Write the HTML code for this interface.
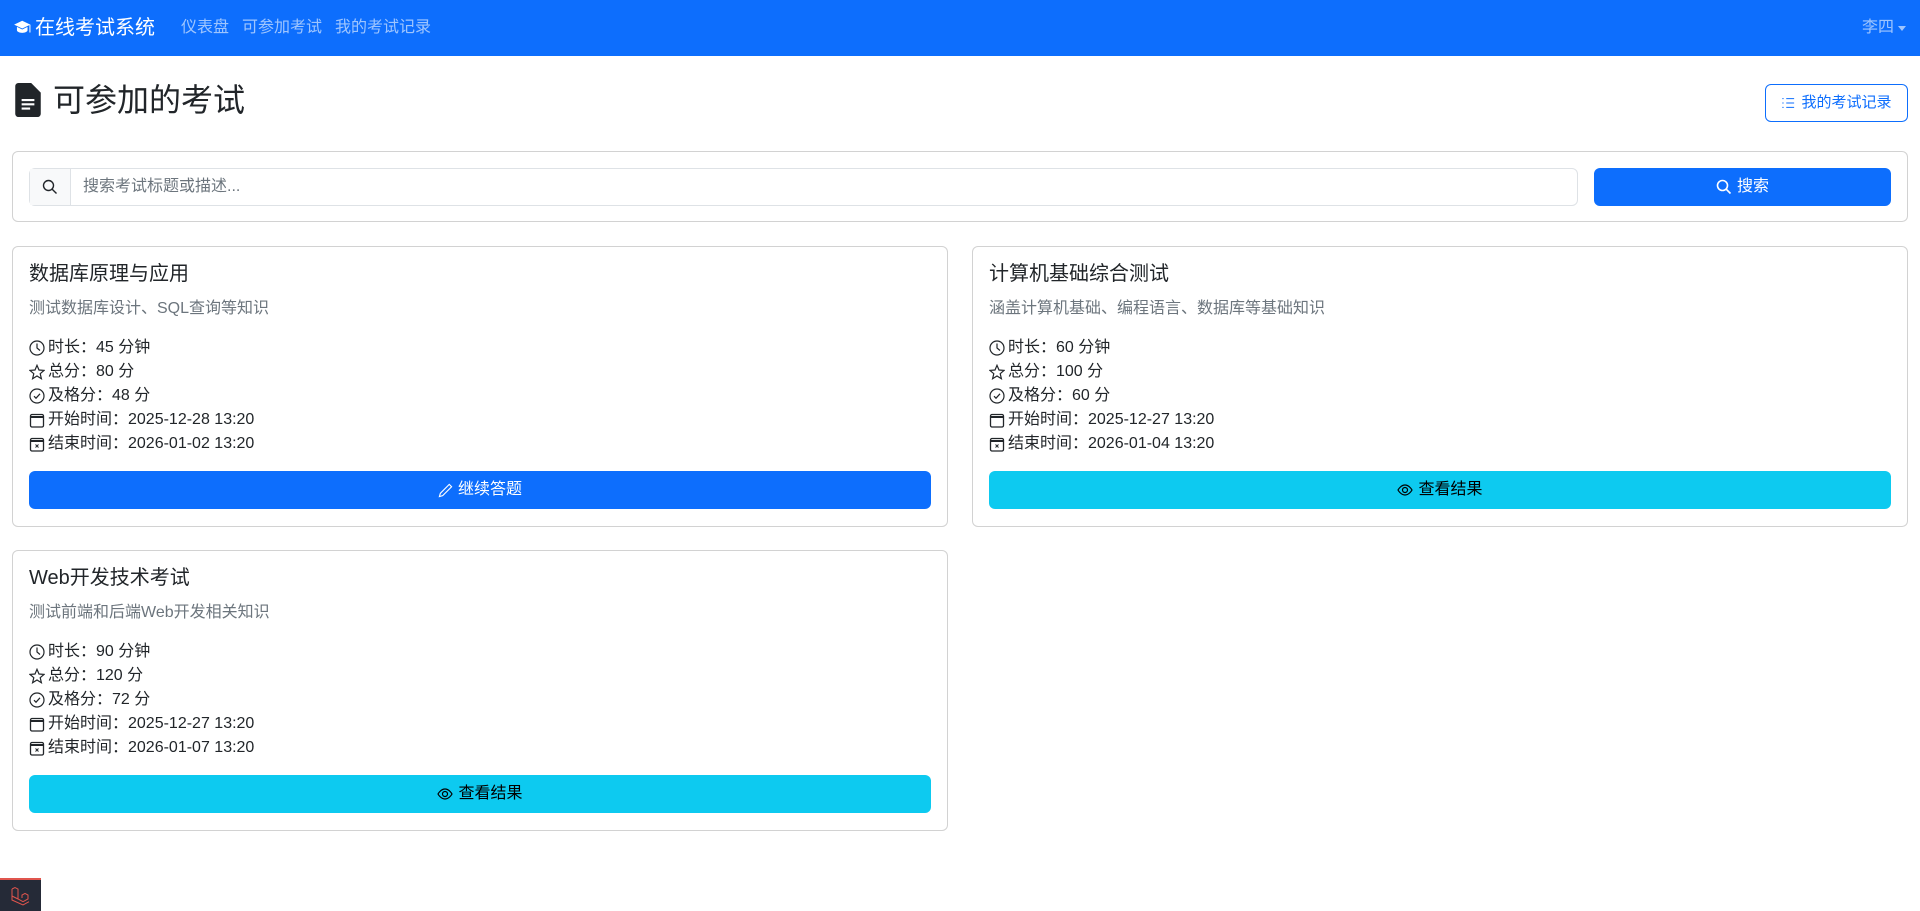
<!DOCTYPE html>
<html><head><meta charset="utf-8"><style>
*{box-sizing:border-box;margin:0;padding:0}
body{width:1920px;height:911px;overflow:hidden;background:#fff;font-family:"Liberation Sans","Noto Sans CJK SC",sans-serif;font-size:16px;color:#212529;line-height:1.5;position:relative}
.nav{height:56px;background:#0d6efd;position:relative}
.brand{position:absolute;left:12px;top:13px;color:#fff;font-size:20px;line-height:30px;display:flex;align-items:center;gap:3px}
.links{position:absolute;left:181px;top:16px;color:rgba(255,255,255,.6);font-size:16px;line-height:24px}
.links span{margin-right:13px}
.user{position:absolute;right:26px;top:16px;color:rgba(255,255,255,.6)}
.caret{position:absolute;right:14px;top:26px;width:0;height:0;border-left:4px solid transparent;border-right:4px solid transparent;border-top:5px solid rgba(255,255,255,.6)}
h2{position:absolute;left:15px;top:80px;font-size:32px;font-weight:400;line-height:40px;display:flex;align-items:center;gap:12px}
.obtn{position:absolute;left:1765px;top:84px;width:143px;height:38px;border:1px solid #0d6efd;border-radius:6px;color:#0d6efd;font-size:15px;display:flex;align-items:center;justify-content:center;gap:6px}
.card{position:absolute;border:1px solid rgba(0,0,0,.175);border-radius:6px;background:#fff}
.ig{position:absolute;left:16px;top:16px;width:1549px;height:38px;border:1px solid #dee2e6;border-radius:6px;display:flex}
.ig .ad{width:41px;background:#f8f9fa;border-right:1px solid #dee2e6;display:flex;align-items:center;justify-content:center}
.ig .ph{padding-left:12px;line-height:36px;color:#6c757d}
.sbtn{position:absolute;left:1581px;top:16px;width:297px;height:38px;background:#0d6efd;border-radius:6px;color:#fff;display:flex;align-items:center;justify-content:center;gap:5px}
.ex{width:936px;height:281px}
.ex .t{position:absolute;left:16px;top:12px;font-size:20px;line-height:30px}
.ex .d{position:absolute;left:16px;top:50px;color:#6c757d}
.ex ul{position:absolute;left:16px;top:89px;list-style:none}
.ex li{display:flex;align-items:center;gap:3px;height:24px}
.ex .b{position:absolute;left:16px;top:224px;width:902px;height:38px;border-radius:6px;display:flex;align-items:center;justify-content:center;gap:5px}
.pb{background:#0d6efd;color:#fff}
.ib{background:#0dcaf0;color:#000}
.dbg{position:absolute;left:0;top:878px;width:41px;height:33px;background:#252a37;border-top:2px solid #e0554d;display:flex;align-items:center;justify-content:center}
</style></head><body>
<div class="nav">
<div class="brand"><svg width="20" height="18" viewBox="0 0 16 16" fill="#fff"><path d="M8.2 1.6 15.4 5 8.2 8.4 1 5z"/><path d="M3.5 7v3c0 1.2 2 2.3 4.7 2.3s4.7-1.1 4.7-2.3V7L8.2 9.3z"/><rect x="14.6" y="5" width="0.9" height="7"/></svg>在线考试系统</div>
<div class="links"><span>仪表盘</span><span>可参加考试</span><span>我的考试记录</span></div>
<div class="user">李四</div><div class="caret"></div>
</div>
<h2><svg width="26" height="34" viewBox="0 0 12 16"><path d="M1.5 0h6L12 4.5V14.5A1.5 1.5 0 0 1 10.5 16h-9A1.5 1.5 0 0 1 0 14.5V1.5A1.5 1.5 0 0 1 1.5 0z" fill="#212529"/><path d="M3 8h6M3 10h6M3 12h4" stroke="#fff" stroke-width="1"/></svg>可参加的考试</h2>
<div class="obtn"><svg width="14" height="14" viewBox="0 0 16 16" fill="none" stroke="#0d6efd" stroke-width="1.2"><path d="M6 3h9M6 8h9M6 13h9M1.5 3h1.5M1.5 8h1.5M1.5 13h1.5"/></svg>我的考试记录</div>
<div class="card" style="left:12px;top:151px;width:1896px;height:71px">
<div class="ig"><div class="ad"><svg width="16" height="16" viewBox="0 0 16 16" fill="none" stroke="#212529" stroke-width="1.4"><circle cx="6.5" cy="6.5" r="5"/><path d="M10.2 10.2 14.5 14.5"/></svg></div><div class="ph">搜索考试标题或描述...</div></div>
<div class="sbtn"><svg width="16" height="16" viewBox="0 0 16 16" fill="none" stroke="#fff" stroke-width="1.6"><circle cx="6.5" cy="6.5" r="5"/><path d="M10.2 10.2 14.5 14.5"/></svg>搜索</div>
</div>

<div class="card ex" style="left:12px;top:246px">
<div class="t">数据库原理与应用</div><div class="d">测试数据库设计、SQL查询等知识</div>
<ul>
<li><svg width="16" height="16" viewBox="0 0 16 16" fill="none" stroke="#212529" stroke-width="1.2"><circle cx="8" cy="8" r="7"/><path d="M8 3.5V8l3 2.5"/></svg>时长：45 分钟</li>
<li><svg width="16" height="16" viewBox="0 0 16 16" fill="none" stroke="#212529" stroke-width="1.2"><path d="M8 1.3 10 6l5 .4-3.8 3.3 1.2 5L8 12l-4.4 2.7 1.2-5L1 6.4 6 6z"/></svg>总分：80 分</li>
<li><svg width="16" height="16" viewBox="0 0 16 16" fill="none" stroke="#212529" stroke-width="1.2"><circle cx="8" cy="8" r="7"/><path d="m5 8.2 2 2 4-4.4"/></svg>及格分：48 分</li>
<li><svg width="16" height="16" viewBox="0 0 16 16" fill="none" stroke="#212529" stroke-width="1.3"><rect x="1.5" y="2.5" width="13" height="12.5" rx="1.5"/><path d="M1.5 5h13" stroke-width="2"/></svg>开始时间：2025-12-28 13:20</li>
<li><svg width="16" height="16" viewBox="0 0 16 16" fill="none" stroke="#212529" stroke-width="1.3"><rect x="1.5" y="2.5" width="13" height="12.5" rx="1.5"/><path d="M1.5 5h13" stroke-width="2"/><path d="m6.5 8.5 3 3m0-3-3 3" stroke-width="1"/></svg>结束时间：2026-01-02 13:20</li>
</ul>
<div class="b pb"><svg width="15" height="15" viewBox="0 0 16 16" fill="none" stroke="#fff" stroke-width="1.2"><path d="M12 1.5 14.5 4 5 13.5 1.5 14.5 2.5 11z"/></svg>继续答题</div>
</div>

<div class="card ex" style="left:972px;top:246px">
<div class="t">计算机基础综合测试</div><div class="d">涵盖计算机基础、编程语言、数据库等基础知识</div>
<ul>
<li><svg width="16" height="16" viewBox="0 0 16 16" fill="none" stroke="#212529" stroke-width="1.2"><circle cx="8" cy="8" r="7"/><path d="M8 3.5V8l3 2.5"/></svg>时长：60 分钟</li>
<li><svg width="16" height="16" viewBox="0 0 16 16" fill="none" stroke="#212529" stroke-width="1.2"><path d="M8 1.3 10 6l5 .4-3.8 3.3 1.2 5L8 12l-4.4 2.7 1.2-5L1 6.4 6 6z"/></svg>总分：100 分</li>
<li><svg width="16" height="16" viewBox="0 0 16 16" fill="none" stroke="#212529" stroke-width="1.2"><circle cx="8" cy="8" r="7"/><path d="m5 8.2 2 2 4-4.4"/></svg>及格分：60 分</li>
<li><svg width="16" height="16" viewBox="0 0 16 16" fill="none" stroke="#212529" stroke-width="1.3"><rect x="1.5" y="2.5" width="13" height="12.5" rx="1.5"/><path d="M1.5 5h13" stroke-width="2"/></svg>开始时间：2025-12-27 13:20</li>
<li><svg width="16" height="16" viewBox="0 0 16 16" fill="none" stroke="#212529" stroke-width="1.3"><rect x="1.5" y="2.5" width="13" height="12.5" rx="1.5"/><path d="M1.5 5h13" stroke-width="2"/><path d="m6.5 8.5 3 3m0-3-3 3" stroke-width="1"/></svg>结束时间：2026-01-04 13:20</li>
</ul>
<div class="b ib"><svg width="16" height="16" viewBox="0 0 16 16" fill="none" stroke="#000" stroke-width="1.2"><path d="M1 8s2.7-5 7-5 7 5 7 5-2.7 5-7 5-7-5-7-5z"/><circle cx="8" cy="8" r="2.5"/></svg>查看结果</div>
</div>

<div class="card ex" style="left:12px;top:550px">
<div class="t">Web开发技术考试</div><div class="d">测试前端和后端Web开发相关知识</div>
<ul>
<li><svg width="16" height="16" viewBox="0 0 16 16" fill="none" stroke="#212529" stroke-width="1.2"><circle cx="8" cy="8" r="7"/><path d="M8 3.5V8l3 2.5"/></svg>时长：90 分钟</li>
<li><svg width="16" height="16" viewBox="0 0 16 16" fill="none" stroke="#212529" stroke-width="1.2"><path d="M8 1.3 10 6l5 .4-3.8 3.3 1.2 5L8 12l-4.4 2.7 1.2-5L1 6.4 6 6z"/></svg>总分：120 分</li>
<li><svg width="16" height="16" viewBox="0 0 16 16" fill="none" stroke="#212529" stroke-width="1.2"><circle cx="8" cy="8" r="7"/><path d="m5 8.2 2 2 4-4.4"/></svg>及格分：72 分</li>
<li><svg width="16" height="16" viewBox="0 0 16 16" fill="none" stroke="#212529" stroke-width="1.3"><rect x="1.5" y="2.5" width="13" height="12.5" rx="1.5"/><path d="M1.5 5h13" stroke-width="2"/></svg>开始时间：2025-12-27 13:20</li>
<li><svg width="16" height="16" viewBox="0 0 16 16" fill="none" stroke="#212529" stroke-width="1.3"><rect x="1.5" y="2.5" width="13" height="12.5" rx="1.5"/><path d="M1.5 5h13" stroke-width="2"/><path d="m6.5 8.5 3 3m0-3-3 3" stroke-width="1"/></svg>结束时间：2026-01-07 13:20</li>
</ul>
<div class="b ib"><svg width="16" height="16" viewBox="0 0 16 16" fill="none" stroke="#000" stroke-width="1.2"><path d="M1 8s2.7-5 7-5 7 5 7 5-2.7 5-7 5-7-5-7-5z"/><circle cx="8" cy="8" r="2.5"/></svg>查看结果</div>
</div>

<div class="dbg"><svg width="22" height="20" viewBox="0 0 22 20" fill="none" stroke="#e0554d" stroke-width="1"><path d="M2 3 5 1.5 8 3v10l5 2.7 5-2.7V9l-3-1.6L12 9v3M2 3v11l11 5 6-3.3M8 13 2 10"/></svg></div>
</body></html>
